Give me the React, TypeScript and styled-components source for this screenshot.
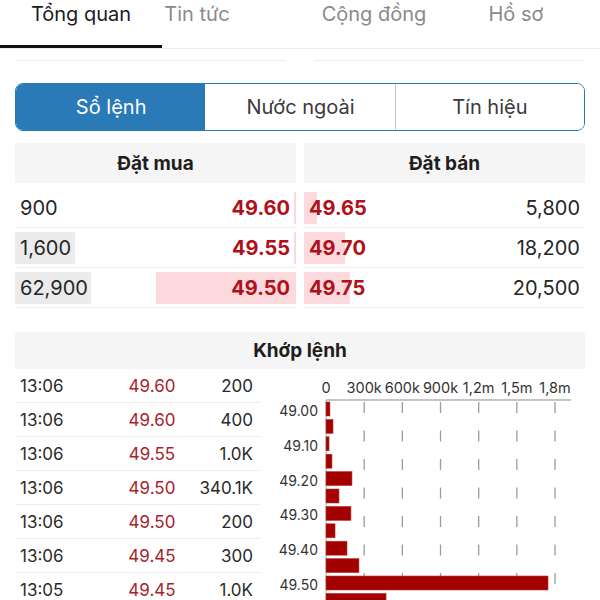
import React from 'react'
import styled, { createGlobalStyle } from 'styled-components'

const colors = {
  text: '#222222',
  muted: '#8a8a8a',
  blue: '#2b7ab8',
  red: '#b0101a',
  redSoft: '#a8232b',
  pink: '#fbd9dc',
  volume: '#ebebeb',
  header: '#f5f5f5',
  line: '#ececec',
  bar: '#a30000',
}

const GlobalStyle = createGlobalStyle`
  body {
    margin: 0;
    background: #fff;
    font-family: Inter, "Liberation Sans", sans-serif;
    color: ${colors.text};
  }
`

const Page = styled.div`
  width: 600px;
  height: 600px;
  overflow: hidden;
  background: #fff;
`

const TabBar = styled.nav`
  display: flex;
  height: 49px;
  border-bottom: 1px solid ${colors.line};
  box-sizing: border-box;
`

const Tab = styled.div<{ $width: number; $offset: number; $active?: boolean }>`
  flex: none;
  width: ${(p) => p.$width}px;
  margin-left: ${(p) => p.$offset}px;
  height: 48px;
  box-sizing: border-box;
  display: flex;
  justify-content: center;
  line-height: 28px;
  font-size: 20px;
  color: ${(p) => (p.$active ? '#1c1c1c' : colors.muted)};
  border-bottom: 3px solid ${(p) => (p.$active ? '#111' : 'transparent')};
`

const PeekRow = styled.div`
  display: grid;
  grid-template-columns: 1fr 1fr;
  gap: 28px;
  padding: 0 15px;
`

const PeekCell = styled.div`
  height: 11px;
  border-bottom: 1px solid ${colors.line};
`

const Segmented = styled.div`
  margin: 22px 15px 0;
  height: 48px;
  display: grid;
  grid-template-columns: repeat(3, 1fr);
  border: 1.5px solid ${colors.blue};
  border-radius: 8px;
  overflow: hidden;
  box-sizing: border-box;
`

const Segment = styled.div<{ $active?: boolean; $divider?: boolean }>`
  display: flex;
  align-items: center;
  justify-content: center;
  font-size: 20px;
  background: ${(p) => (p.$active ? colors.blue : '#fff')};
  color: ${(p) => (p.$active ? '#fff' : '#3a3a3a')};
  border-left: 1px solid ${(p) => (p.$divider ? '#c9c9c9' : 'transparent')};
`

const OrderBook = styled.section`
  margin: 12px 15px 0;
  display: grid;
  grid-template-columns: 1fr 1fr;
  gap: 8px;
`

const SectionHeader = styled.div<{ $height: number }>`
  height: ${(p) => p.$height}px;
  display: flex;
  align-items: center;
  justify-content: center;
  background: ${colors.header};
  font-size: 19px;
  font-weight: 700;
  color: #1e1e1e;
`

const BookRows = styled.div`
  margin-top: 5px;
`

const BookRow = styled.div`
  height: 40px;
  display: flex;
  align-items: center;
  border-bottom: 1px solid ${colors.line};
  box-sizing: border-box;
`

const VolumeCell = styled.div<{ $bar: number; $align: 'left' | 'right' }>`
  flex: 1;
  height: 100%;
  display: flex;
  align-items: center;
  justify-content: ${(p) => (p.$align === 'left' ? 'flex-start' : 'flex-end')};
  padding: 0 5px;
  font-size: 20px;
  color: #262626;
  background: linear-gradient(${colors.volume}, ${colors.volume}) no-repeat left center /
    ${(p) => p.$bar}px 32px;
`

const PriceCell = styled.div<{ $bar: number; $side: 'buy' | 'sell' }>`
  flex: 1;
  height: 100%;
  display: flex;
  align-items: center;
  justify-content: ${(p) => (p.$side === 'buy' ? 'flex-end' : 'flex-start')};
  padding: 0 6px 0 5px;
  font-size: 20px;
  font-weight: 700;
  color: ${colors.red};
  background: linear-gradient(${colors.pink}, ${colors.pink}) no-repeat
    ${(p) => (p.$side === 'buy' ? 'right' : 'left')} center / ${(p) => p.$bar}px 32px;
`

const MatchSection = styled.section`
  margin: 24px 15px 0;
`

const MatchBody = styled.div`
  display: grid;
  grid-template-columns: 245px 1fr;
  gap: 10px;
`

const TradeRow = styled.div`
  height: 34px;
  box-sizing: border-box;
  display: grid;
  grid-template-columns: 105px 54px 1fr;
  align-items: center;
  padding: 0 7px 0 5px;
  border-bottom: 1px solid ${colors.line};
  font-size: 17px;
  color: #2a2a2a;
`

const TradePrice = styled.span`
  text-align: center;
  color: ${colors.redSoft};
`

const TradeVolume = styled.span`
  text-align: right;
`

const ChartSvg = styled.svg`
  display: block;
  font-family: Inter, "Liberation Sans", sans-serif;
`

const tabs = [
  { label: 'Tổng quan', width: 162, offset: 0, active: true },
  { label: 'Tin tức', width: 70, offset: 0 },
  { label: 'Cộng đồng', width: 160, offset: 62 },
  { label: 'Hồ sơ', width: 100, offset: 12 },
]

const bids = [
  { volume: '900', price: '49.60', volBar: 0, priceBar: 2 },
  { volume: '1,600', price: '49.55', volBar: 60, priceBar: 2 },
  { volume: '62,900', price: '49.50', volBar: 76, priceBar: 140 },
]

const asks = [
  { volume: '5,800', price: '49.65', priceBar: 13 },
  { volume: '18,200', price: '49.70', priceBar: 41 },
  { volume: '20,500', price: '49.75', priceBar: 46 },
]

const trades = [
  ['13:06', '49.60', '200'],
  ['13:06', '49.60', '400'],
  ['13:06', '49.55', '1.0K'],
  ['13:06', '49.50', '340.1K'],
  ['13:06', '49.50', '200'],
  ['13:06', '49.45', '300'],
  ['13:05', '49.45', '1.0K'],
]

const ticks = ['0', '300k', '600k', '900k', '1,2m', '1,5m', '1,8m']
const volumes = [31e3, 55e3, 24e3, 47e3, 204e3, 102e3, 196e3, 71e3, 165e3, 259e3, 1745e3, 472e3]
const priceLabels = ['49.00', '49.10', '49.20', '49.30', '49.40', '49.50']

const X0 = 56
const TICK_STEP = 38.17
const SCALE = (TICK_STEP * 6) / 1.8e6
const BAR_TOP = 33
const BAR_PITCH = 17.4
const BAR_HEIGHT = 14

const VolumeChart: React.FC = () => (
  <ChartSvg width={315} height={231} viewBox="0 0 315 231">
    {ticks.map((t, i) => (
      <text key={t} x={X0 + i * TICK_STEP} y={24} fontSize={14.5} fill="#333" textAnchor="middle">
        {t}
      </text>
    ))}
    <line x1={X0} y1={31} x2={301} y2={31} stroke="#b0b0b0" strokeWidth={1.5} />
    {ticks.slice(1).map((t, i) => (
      <line
        key={t}
        x1={X0 + (i + 1) * TICK_STEP}
        y1={33}
        x2={X0 + (i + 1) * TICK_STEP}
        y2={231}
        stroke="#9c9c9c"
        strokeWidth={1.3}
        strokeDasharray="11 17.5"
      />
    ))}
    <line x1={X0} y1={31} x2={X0} y2={231} stroke="#b0b0b0" strokeWidth={1} />
    {volumes.map((v, i) => (
      <rect
        key={i}
        x={X0}
        y={BAR_TOP + i * BAR_PITCH}
        width={Math.max(2, v * SCALE)}
        height={BAR_HEIGHT}
        fill={colors.bar}
        stroke="#b83a3a"
        strokeWidth={0.6}
      />
    ))}
    {priceLabels.map((p, i) => (
      <text
        key={p}
        x={48}
        y={BAR_TOP + i * 2 * BAR_PITCH + BAR_HEIGHT / 2 + 7}
        fontSize={14}
        fill="#333"
        textAnchor="end"
      >
        {p}
      </text>
    ))}
  </ChartSvg>
)

const App: React.FC = () => (
  <Page>
    <GlobalStyle />
    <TabBar>
      {tabs.map((t) => (
        <Tab key={t.label} $width={t.width} $offset={t.offset} $active={t.active}>
          {t.label}
        </Tab>
      ))}
    </TabBar>
    <PeekRow>
      <PeekCell />
      <PeekCell />
    </PeekRow>

    <Segmented>
      <Segment $active>Sổ lệnh</Segment>
      <Segment>Nước ngoài</Segment>
      <Segment $divider>Tín hiệu</Segment>
    </Segmented>

    <OrderBook>
      <div>
        <SectionHeader $height={40}>Đặt mua</SectionHeader>
        <BookRows>
          {bids.map((b) => (
            <BookRow key={b.price}>
              <VolumeCell $bar={b.volBar} $align="left">
                {b.volume}
              </VolumeCell>
              <PriceCell $bar={b.priceBar} $side="buy">
                {b.price}
              </PriceCell>
            </BookRow>
          ))}
        </BookRows>
      </div>
      <div>
        <SectionHeader $height={40}>Đặt bán</SectionHeader>
        <BookRows>
          {asks.map((a) => (
            <BookRow key={a.price}>
              <PriceCell $bar={a.priceBar} $side="sell">
                {a.price}
              </PriceCell>
              <VolumeCell $bar={0} $align="right">
                {a.volume}
              </VolumeCell>
            </BookRow>
          ))}
        </BookRows>
      </div>
    </OrderBook>

    <MatchSection>
      <SectionHeader $height={37}>Khớp lệnh</SectionHeader>
      <MatchBody>
        <div>
          {trades.map(([time, price, vol], i) => (
            <TradeRow key={i}>
              <span>{time}</span>
              <TradePrice>{price}</TradePrice>
              <TradeVolume>{vol}</TradeVolume>
            </TradeRow>
          ))}
        </div>
        <VolumeChart />
      </MatchBody>
    </MatchSection>
  </Page>
)

export default App
